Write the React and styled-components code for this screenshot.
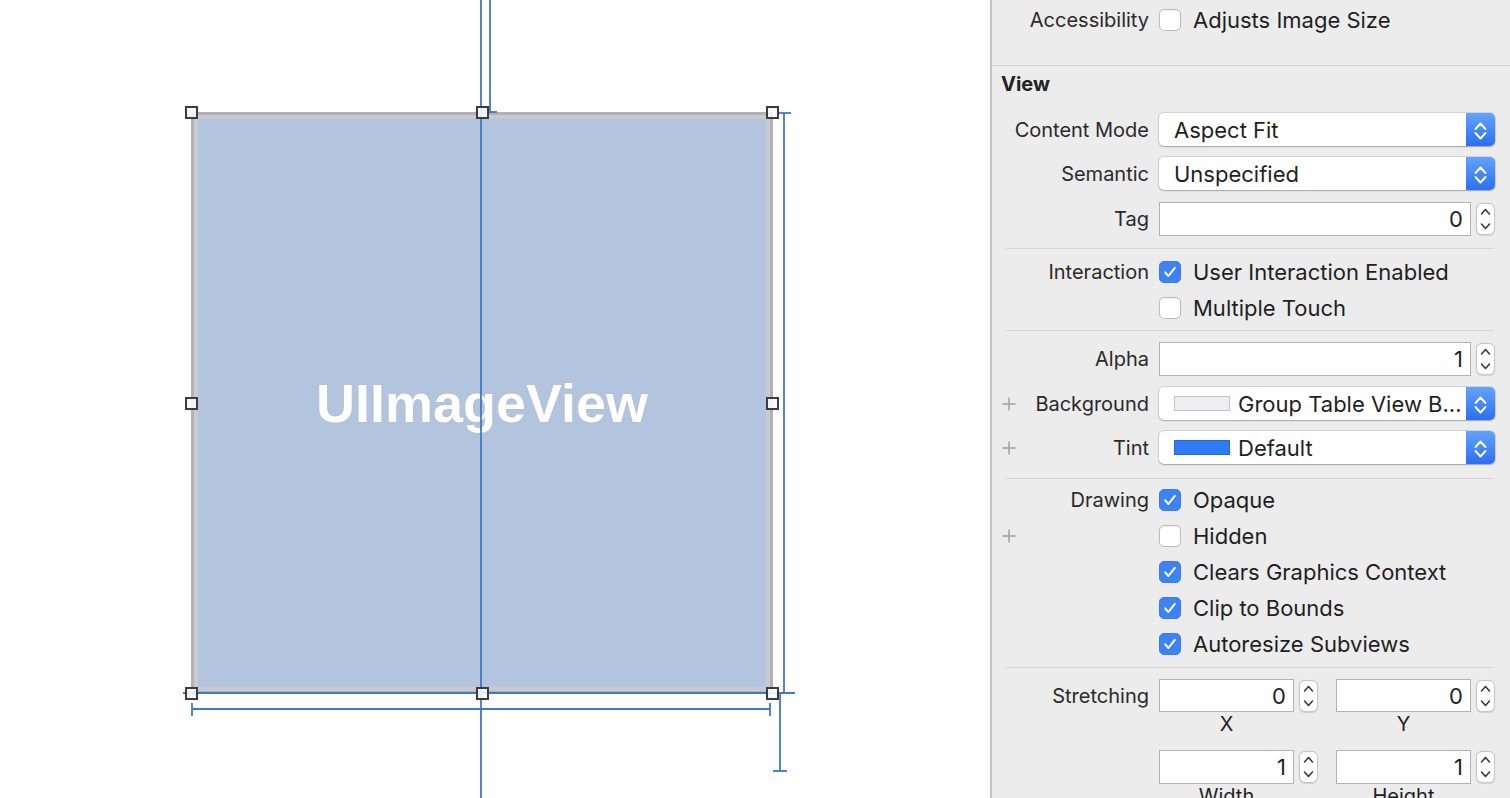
import React from "react";
import styled, { createGlobalStyle } from "styled-components";

const GlobalStyle = createGlobalStyle`
  html, body {
    margin: 0;
    padding: 0;
  }
  body {
    font-family: Inter, "Liberation Sans", sans-serif;
    background: #fff;
  }
`;

const Screen = styled.div`
  display: flex;
  width: 1510px;
  height: 798px;
  overflow: hidden;
`;

/* ---------- canvas ---------- */

const Canvas = styled.div`
  position: relative;
  flex: 0 0 990px;
  height: 100%;
  background: #fff;
`;

const ImageBox = styled.div`
  position: absolute;
  left: 191px;
  top: 112px;
  width: 582px;
  height: 582px;
  box-sizing: border-box;
  border: 3px solid #b1b1b3;
  box-shadow: inset 0 0 0 4px #c9cad0;
  background: #b3c5de;
  display: flex;
  align-items: center;
  justify-content: center;
`;

const HandleLayer = styled(ImageBox)`
  background: transparent;
  border: none;
  box-shadow: none;
  z-index: 2;
`;

const BoxTitle = styled.span`
  font-family: "Liberation Sans", Arial, sans-serif;
  font-weight: 700;
  font-size: 54px;
  color: #fff;
  text-shadow: 0 0 1px rgba(120, 130, 150, 0.4);
`;

const Guides = styled.svg`
  position: absolute;
  left: 0;
  top: 0;
  pointer-events: none;
`;

const handlePos = { start: "-6px", mid: "calc(50% - 6.5px)", end: "calc(100% - 7px)" };

const Handle = styled.div`
  position: absolute;
  left: ${(p) => handlePos[p.$x]};
  top: ${(p) => handlePos[p.$y]};
  width: 13px;
  height: 13px;
  box-sizing: border-box;
  border: 2px solid #3c3c3c;
  background: rgba(245, 247, 250, 0.92);
`;

/* ---------- inspector ---------- */

const Inspector = styled.aside`
  flex: 1;
  border-left: 2px solid #c2c2c2;
  background: #ececec;
  display: flex;
  flex-direction: column;
  overflow: hidden;
  color: #2a2a2a;
  font-size: 20px;

  & > * {
    flex-shrink: 0;
  }
`;

const Row = styled.div`
  display: grid;
  grid-template-columns: 157px 1fr;
  column-gap: 10px;
  align-items: center;
  height: ${(p) => p.$h || 36}px;
  padding-right: 15px;
  margin-top: ${(p) => p.$mt || 0}px;
  flex-shrink: 0;
`;

const Label = styled.div`
  display: flex;
  align-items: center;
  justify-content: flex-end;
  padding-left: 10px;
  white-space: nowrap;
`;

const PlusIcon = styled.svg`
  margin-right: auto;
  flex: 0 0 auto;
`;

const FullRule = styled.div`
  height: 1px;
  background: #d2d2d2;
  margin-top: ${(p) => p.$mt || 0}px;
`;

const Rule = styled.div`
  height: 1px;
  background: #d5d5d5;
  margin: 0 16px 0 14px;
`;

const SectionHeader = styled.div`
  height: 47px;
  box-sizing: border-box;
  padding: 8px 9px 0;
  line-height: 20px;
  font-weight: 700;
  color: #222;
`;

const Section = styled.div`
  display: flex;
  flex-direction: column;
  gap: ${(p) => p.$gap || 0}px;
  padding: ${(p) => p.$pt || 0}px 0 ${(p) => p.$pb || 0}px;
`;

const CheckWrap = styled.label`
  display: flex;
  align-items: center;
  gap: 12px;
  color: #1f1f1f;
  font-size: 22px;
  white-space: nowrap;
`;

const Box = styled.span`
  flex: 0 0 22px;
  width: 22px;
  height: 22px;
  box-sizing: border-box;
  border-radius: 5px;
  display: flex;
  align-items: center;
  justify-content: center;
  background: ${(p) => (p.$on ? "#3d83f6" : "#fff")};
  border: 1px solid ${(p) => (p.$on ? "#3a7cec" : "#bcbcbc")};
  box-shadow: ${(p) => (p.$on ? "none" : "inset 0 1px 1px rgba(0,0,0,0.06)")};
`;

const SelectBox = styled.div`
  display: flex;
  height: 100%;
  background: #fff;
  border-radius: 5px;
  overflow: hidden;
  box-shadow: 0 0 0 1px rgba(0, 0, 0, 0.1), 0 1px 1.5px rgba(0, 0, 0, 0.22);
`;

const SelectValue = styled.div`
  flex: 1;
  display: flex;
  align-items: center;
  padding-left: 15px;
  color: #1f1f1f;
  font-size: 22px;
  white-space: nowrap;
  overflow: hidden;
`;

const Swatch = styled.span`
  flex: 0 0 56px;
  height: 15px;
  box-sizing: border-box;
  margin-right: 8px;
  background: ${(p) => p.$color};
  border: 1px solid ${(p) => p.$border};
`;

const SelectArrow = styled.div`
  flex: 0 0 29px;
  background: linear-gradient(#64a3fa, #2b6ff2);
  display: flex;
  align-items: center;
  justify-content: center;
`;

const NumberWrap = styled.div`
  display: flex;
  align-items: center;
  height: 100%;
  gap: 5px;
`;

const Field = styled.div`
  flex: 1;
  height: 100%;
  box-sizing: border-box;
  border: 1px solid #b3b3b3;
  background: #fff;
  display: flex;
  align-items: center;
  justify-content: flex-end;
  padding-right: 7px;
  color: #1f1f1f;
  font-size: 22px;
`;

const Stepper = styled.div`
  flex: 0 0 19px;
  height: 32px;
  box-sizing: border-box;
  border-radius: 6px;
  background: #fff;
  border: 1px solid #c6c6c6;
  box-shadow: 0 0.5px 1px rgba(0, 0, 0, 0.12);
  display: flex;
`;

const Pair = styled.div`
  display: grid;
  grid-template-columns: 1fr 1fr;
  column-gap: 18px;
  height: 100%;
`;

const Caption = styled.div`
  padding-right: 24px;
  text-align: center;
  color: #1f1f1f;
  line-height: 25px;
`;

const CaptionRow = styled.div`
  display: grid;
  grid-template-columns: 157px 1fr;
  column-gap: 10px;
  padding-right: 15px;
  height: 25px;
`;

/* ---------- small parts ---------- */

const Plus = () => (
  <PlusIcon width="14" height="14" viewBox="0 0 14 14">
    <path d="M7 0.5V13.5M0.5 7H13.5" stroke="#9f9f9f" strokeWidth="1.4" />
  </PlusIcon>
);

const FieldLabel = ({ plus, children }) => (
  <Label>
    {plus && <Plus />}
    {children}
  </Label>
);

const Check = ({ on, children }) => (
  <CheckWrap>
    <Box $on={on}>
      {on && (
        <svg width="14" height="14" viewBox="0 0 14 14">
          <path d="M2.2 7.4L5.4 11L11.8 2.8" fill="none" stroke="#fff" strokeWidth="2" strokeLinecap="round" strokeLinejoin="round" />
        </svg>
      )}
    </Box>
    {children}
  </CheckWrap>
);

const Select = ({ swatch, children }) => (
  <SelectBox>
    <SelectValue>
      {swatch && <Swatch $color={swatch[0]} $border={swatch[1]} />}
      {children}
    </SelectValue>
    <SelectArrow>
      <svg width="29" height="33" viewBox="0 0 29 33">
        <path d="M9.5 16L14.5 10.5L19.5 16M9.5 20L14.5 25.5L19.5 20" fill="none" stroke="#fff" strokeWidth="1.9" strokeLinecap="round" strokeLinejoin="round" />
      </svg>
    </SelectArrow>
  </SelectBox>
);

const NumberInput = ({ value }) => (
  <NumberWrap>
    <Field>{value}</Field>
    <Stepper>
      <svg width="17" height="30" viewBox="0 0 17 30">
        <path d="M4.5 10L8.5 5.5L12.5 10M4.5 20L8.5 24.5L12.5 20" fill="none" stroke="#333" strokeWidth="1.5" strokeLinecap="round" strokeLinejoin="round" />
      </svg>
    </Stepper>
  </NumberWrap>
);

const guideLines = [
  [481, 0, 481, 798],
  [490, 0, 490, 113],
  [490, 112, 497, 112],
  [784, 113, 784, 692],
  [777, 113, 791, 113],
  [183, 693, 795, 693],
  [780, 693, 780, 771],
  [773, 771, 787, 771],
  [192, 709, 770, 709],
  [192, 703, 192, 716],
  [770, 703, 770, 716],
];

const handles = [
  ["start", "start"], ["mid", "start"], ["end", "start"],
  ["start", "mid"], ["end", "mid"],
  ["start", "end"], ["mid", "end"], ["end", "end"],
];

export default function App() {
  return (
    <>
      <GlobalStyle />
      <Screen>
        <Canvas>
          <ImageBox>
            <BoxTitle>UIImageView</BoxTitle>
          </ImageBox>
          <Guides width="990" height="798">
            {guideLines.map(([x1, y1, x2, y2], i) => (
              <line key={i} x1={x1} y1={y1} x2={x2} y2={y2} stroke="#3f78c4" strokeWidth="1.8" />
            ))}
          </Guides>
          <HandleLayer>
            {handles.map(([x, y]) => (
              <Handle key={x + y} $x={x} $y={y} />
            ))}
          </HandleLayer>
        </Canvas>

        <Inspector>
          <Row $h={40}>
            <FieldLabel>Accessibility</FieldLabel>
            <Check>Adjusts Image Size</Check>
          </Row>
          <FullRule $mt={25} />
          <SectionHeader>View</SectionHeader>

          <Section $gap={11} $pb={12}>
            <Row $h={33}>
              <FieldLabel>Content Mode</FieldLabel>
              <Select>Aspect Fit</Select>
            </Row>
            <Row $h={33}>
              <FieldLabel>Semantic</FieldLabel>
              <Select>Unspecified</Select>
            </Row>
            <Row $h={34} $mt={1}>
              <FieldLabel>Tag</FieldLabel>
              <NumberInput value="0" />
            </Row>
          </Section>
          <Rule />

          <Section $pt={5} $pb={4}>
            <Row>
              <FieldLabel>Interaction</FieldLabel>
              <Check on>User Interaction Enabled</Check>
            </Row>
            <Row>
              <FieldLabel />
              <Check>Multiple Touch</Check>
            </Row>
          </Section>
          <Rule />

          <Section $gap={11} $pt={11} $pb={14}>
            <Row $h={34}>
              <FieldLabel>Alpha</FieldLabel>
              <NumberInput value="1" />
            </Row>
            <Row $h={33}>
              <FieldLabel plus>Background</FieldLabel>
              <Select swatch={["#ededf2", "#c4c4c8"]}>Group Table View B...</Select>
            </Row>
            <Row $h={33}>
              <FieldLabel plus>Tint</FieldLabel>
              <Select swatch={["#2f7bf5", "#2a64c8"]}>Default</Select>
            </Row>
          </Section>
          <Rule />

          <Section $pt={3} $pb={5}>
            <Row>
              <FieldLabel>Drawing</FieldLabel>
              <Check on>Opaque</Check>
            </Row>
            <Row>
              <FieldLabel plus />
              <Check>Hidden</Check>
            </Row>
            <Row>
              <FieldLabel />
              <Check on>Clears Graphics Context</Check>
            </Row>
            <Row>
              <FieldLabel />
              <Check on>Clip to Bounds</Check>
            </Row>
            <Row>
              <FieldLabel />
              <Check on>Autoresize Subviews</Check>
            </Row>
          </Section>
          <Rule />

          <Section $pt={11}>
            <Row $h={33}>
              <FieldLabel>Stretching</FieldLabel>
              <Pair>
                <NumberInput value="0" />
                <NumberInput value="0" />
              </Pair>
            </Row>
            <CaptionRow>
              <span />
              <Pair>
                <Caption>X</Caption>
                <Caption>Y</Caption>
              </Pair>
            </CaptionRow>
            <Row $h={34} $mt={13}>
              <FieldLabel />
              <Pair>
                <NumberInput value="1" />
                <NumberInput value="1" />
              </Pair>
            </Row>
            <CaptionRow>
              <span />
              <Pair>
                <Caption>Width</Caption>
                <Caption>Height</Caption>
              </Pair>
            </CaptionRow>
          </Section>
        </Inspector>
      </Screen>
    </>
  );
}
